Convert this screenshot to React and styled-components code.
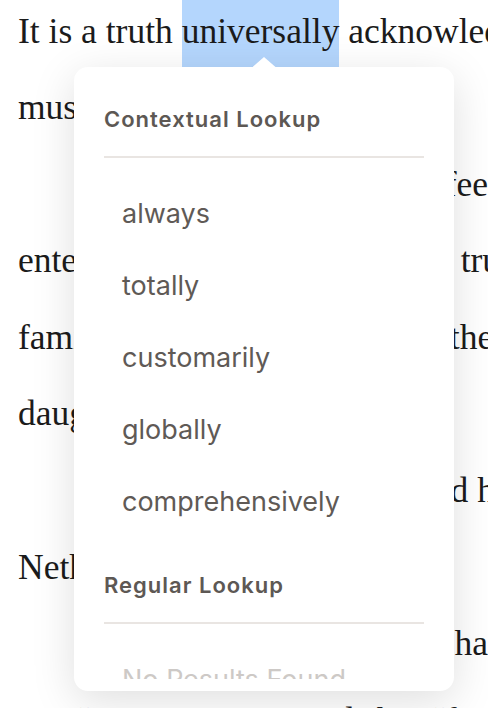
import styled, { createGlobalStyle } from "styled-components";

const GlobalStyle = createGlobalStyle`
  html,
  body {
    margin: 0;
    padding: 0;
    background: #fff;
  }
  body {
    width: 488px;
    height: 708px;
    overflow: hidden;
  }
`;

const Page = styled.div`
  position: relative;
  width: 488px;
  height: 708px;
  overflow: hidden;
  background: #fff;
`;

const Article = styled.article`
  margin-top: -7.5px;
  padding-left: 18px;
  font-family: "Liberation Serif", "Times New Roman", serif;
  font-size: 35.5px;
  line-height: 76.6px;
  color: #1b1b1b;
  white-space: nowrap;
`;

const Para = styled.p`
  margin: 0;
  text-indent: ${(p) => (p.$indent ? "56px" : "0")};
`;

const Mark = styled.span`
  display: inline-block;
  text-indent: 0;
  background: #b4d6fd;
`;

const Popover = styled.div`
  position: absolute;
  left: 74px;
  top: 67px;
  width: 380px;
  height: 624px;
  box-sizing: border-box;
  padding: 5px 30px 12px;
  display: flex;
  flex-direction: column;
  background: #fff;
  border-radius: 14px;
  box-shadow: 0 10px 44px rgba(0, 0, 0, 0.13);
  font-family: Inter, "Noto Sans", sans-serif;

  &::before {
    content: "";
    position: absolute;
    top: -10px;
    left: 50%;
    width: 23px;
    height: 10px;
    margin-left: -11.5px;
    background: #fff;
    clip-path: polygon(50% 0, 100% 100%, 0 100%);
  }
`;

const Scroller = styled.div`
  flex: 1;
  overflow: hidden;
`;

const SectionTitle = styled.div`
  padding: 32px 0 22px;
  border-bottom: 2px solid #e9e5e2;
  font-size: 22px;
  font-weight: 600;
  letter-spacing: 1px;
  line-height: 30px;
  color: #5d5854;
`;

const Options = styled.ul`
  list-style: none;
  margin: 0;
  padding: 20px 0 0;
`;

const Option = styled.li`
  height: 72px;
  padding-left: 18px;
  font-size: 27px;
  line-height: 72px;
  color: ${(p) => (p.$empty ? "#cdc9c6" : "#5f5a56")};
`;

const paragraphs = [
  {
    indent: false,
    lines: [
      [
        "It is a truth ",
        "universally",
        " acknowledged, that a single man in possession of a good fortune,",
      ],
      "must be in want of a wife.",
    ],
  },
  {
    indent: true,
    lines: [
      "However little known the feelings or views of such a man may be on his first",
      "entering a neighbourhood, this truth is so well fixed in the minds of the surrounding",
      "families, that he is considered the rightful property of some one or other of their",
      "daughters.",
    ],
  },
  {
    indent: true,
    lines: [
      "\u201CMy dear Mr. Bennet,\u201D said his lady to him one day, \u201Chave you heard that",
      "Netherfield Park is let at last?\u201D",
    ],
  },
  {
    indent: true,
    lines: ["Mr. Bennet replied that he had not."],
  },
  {
    indent: true,
    lines: [
      "\u201CBut it is,\u201D returned she; \u201Cfor Mrs. Long has just been here, and she told me all about it.\u201D",
    ],
  },
];

const lookups = [
  {
    title: "Contextual Lookup",
    words: ["always", "totally", "customarily", "globally", "comprehensively"],
  },
  { title: "Regular Lookup", words: [] },
];

function Line({ line }) {
  if (typeof line === "string") return line;
  const [before, word, after] = line;
  return (
    <>
      {before}
      <Mark>{word}</Mark>
      {after}
    </>
  );
}

export default function App() {
  return (
    <>
      <GlobalStyle />
      <Page>
        <Article>
          {paragraphs.map((para, i) => (
            <Para key={i} $indent={para.indent}>
              {para.lines.map((line, j) => (
                <span key={j}>
                  {j > 0 && <br />}
                  <Line line={line} />
                </span>
              ))}
            </Para>
          ))}
        </Article>

        <Popover>
          <Scroller>
            {lookups.map((group) => (
              <section key={group.title}>
                <SectionTitle>{group.title}</SectionTitle>
                <Options>
                  {group.words.length ? (
                    group.words.map((w) => <Option key={w}>{w}</Option>)
                  ) : (
                    <Option $empty>No Results Found</Option>
                  )}
                </Options>
              </section>
            ))}
          </Scroller>
        </Popover>
      </Page>
    </>
  );
}
